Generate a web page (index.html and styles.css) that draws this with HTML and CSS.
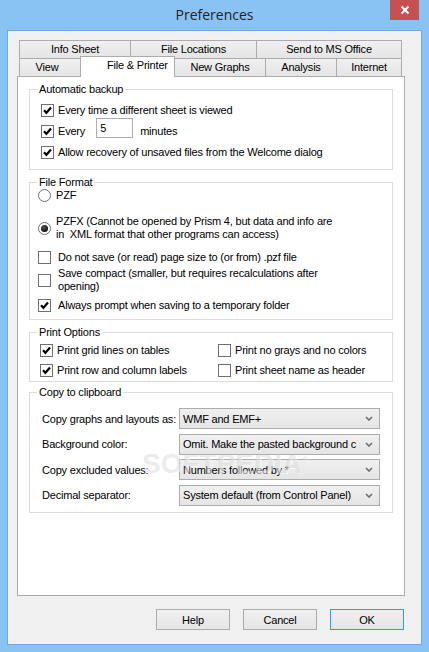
FILE: index.html
```html
<!DOCTYPE html>
<html lang="en">
<head>
    <meta charset="UTF-8">
    <title>Preferences</title>
    <link rel="stylesheet" href="styles.css">
</head>
<body>

<div class="window">
    <div class="titlebar">
        <div class="title">Preferences</div>
        <div class="close">
            <svg width="10" height="10" viewBox="0 0 10 10"><path d="M1.5 1.5L8.5 8.5M8.5 1.5L1.5 8.5" stroke="#fff" stroke-width="2"/></svg>
        </div>
    </div>

    <div class="client">
        <div class="tabs">
            <div class="tab-row back">
                <div class="tab">Info Sheet</div>
                <div class="tab">File Locations</div>
                <div class="tab last">Send to MS Office</div>
            </div>
            <div class="tab-row front">
                <div class="tab tab-view">View</div>
                <div class="tab active">File &amp; Printer</div>
                <div class="tab">New Graphs</div>
                <div class="tab">Analysis</div>
                <div class="tab last">Internet</div>
            </div>
        </div>

        <div class="panel">
            <!-- Automatic backup -->
            <fieldset class="group backup">
                <legend>Automatic backup</legend>
                <div class="group-body">
                    <label class="opt">
                        <span class="cb"><svg width="11" height="11" viewBox="0 0 11 11"><path d="M2 5.2l2.4 2.6 4.6-5.2" fill="none" stroke="#000" stroke-width="2.2"/></svg></span>
                        Every time a different sheet is viewed
                    </label>
                    <label class="opt">
                        <span class="cb"><svg width="11" height="11" viewBox="0 0 11 11"><path d="M2 5.2l2.4 2.6 4.6-5.2" fill="none" stroke="#000" stroke-width="2.2"/></svg></span>
                        Every
                        <input class="num" type="text" value="5">
                        minutes
                    </label>
                    <label class="opt">
                        <span class="cb"><svg width="11" height="11" viewBox="0 0 11 11"><path d="M2 5.2l2.4 2.6 4.6-5.2" fill="none" stroke="#000" stroke-width="2.2"/></svg></span>
                        Allow recovery of unsaved files from the Welcome dialog
                    </label>
                </div>
            </fieldset>

            <!-- File Format -->
            <fieldset class="group format">
                <legend>File Format</legend>
                <div class="group-body">
                    <label class="opt">
                        <span class="rb"></span>
                        PZF
                    </label>
                    <label class="opt pzfx">
                        <span class="rb on"></span>
                        <span>PZFX (Cannot be opened by Prism 4, but data and info are<br>in &nbsp;XML format that other programs can access)</span>
                    </label>
                    <label class="opt nosize">
                        <span class="cb"></span>
                        Do not save (or read) page size to (or from) .pzf file
                    </label>
                    <label class="opt compact">
                        <span class="cb"></span>
                        <span>Save compact (smaller, but requires recalculations after<br>opening)</span>
                    </label>
                    <label class="opt prompt">
                        <span class="cb"><svg width="11" height="11" viewBox="0 0 11 11"><path d="M2 5.2l2.4 2.6 4.6-5.2" fill="none" stroke="#000" stroke-width="2.2"/></svg></span>
                        Always prompt when saving to a temporary folder
                    </label>
                </div>
            </fieldset>

            <!-- Print Options -->
            <fieldset class="group print">
                <legend>Print Options</legend>
                <div class="group-body">
                    <label class="opt">
                        <span class="cb"><svg width="11" height="11" viewBox="0 0 11 11"><path d="M2 5.2l2.4 2.6 4.6-5.2" fill="none" stroke="#000" stroke-width="2.2"/></svg></span>
                        Print grid lines on tables
                    </label>
                    <label class="opt">
                        <span class="cb"></span>
                        Print no grays and no colors
                    </label>
                    <label class="opt">
                        <span class="cb"><svg width="11" height="11" viewBox="0 0 11 11"><path d="M2 5.2l2.4 2.6 4.6-5.2" fill="none" stroke="#000" stroke-width="2.2"/></svg></span>
                        Print row and column labels
                    </label>
                    <label class="opt">
                        <span class="cb"></span>
                        Print sheet name as header
                    </label>
                </div>
            </fieldset>

            <!-- Copy to clipboard -->
            <fieldset class="group clipboard">
                <legend>Copy to clipboard</legend>
                <div class="group-body">
                    <span>Copy graphs and layouts as:</span>
                    <div class="combo"><span>WMF and EMF+</span><svg width="8" height="5" viewBox="0 0 8 5"><path d="M1 1l3 3 3-3" fill="none" stroke="#6d6d6d" stroke-width="1.6"/></svg></div>

                    <span>Background color:</span>
                    <div class="combo"><span>Omit. Make the pasted background c</span><svg width="8" height="5" viewBox="0 0 8 5"><path d="M1 1l3 3 3-3" fill="none" stroke="#6d6d6d" stroke-width="1.6"/></svg></div>

                    <span>Copy excluded values:</span>
                    <div class="combo"><span>Numbers followed by *</span><svg width="8" height="5" viewBox="0 0 8 5"><path d="M1 1l3 3 3-3" fill="none" stroke="#6d6d6d" stroke-width="1.6"/></svg></div>

                    <span>Decimal separator:</span>
                    <div class="combo"><span>System default (from Control Panel)</span><svg width="8" height="5" viewBox="0 0 8 5"><path d="M1 1l3 3 3-3" fill="none" stroke="#6d6d6d" stroke-width="1.6"/></svg></div>
                </div>
            </fieldset>

            <div class="watermark">SOFTPEDIA<sup>®</sup></div>
        </div>

        <div class="buttons">
            <button class="btn">Help</button>
            <button class="btn">Cancel</button>
            <button class="btn default">OK</button>
        </div>
    </div>
</div>

</body>
</html>
```

FILE: styles.css
```css
* {
    box-sizing: border-box;
}

body {
    margin: 0;
    font-family: "Liberation Sans", Arial, sans-serif;
    font-size: 11px;
    letter-spacing: -0.2px;
    color: #000;
}

.window {
    width: 429px;
    height: 652px;
    background: #89c3f4;
    display: flex;
    flex-direction: column;
}

.titlebar {
    flex: none;
    height: 30px;
    display: grid;
    grid-template-columns: 1fr auto 1fr;
}

.title {
    grid-column: 2;
    font-family: "Open Sans", sans-serif;
    font-size: 14px;
    line-height: 30px;
    letter-spacing: 0;
    color: #222;
}

.close {
    grid-column: 3;
    justify-self: end;
    width: 29px;
    height: 20px;
    margin-right: 10px;
    background: #c75050;
    display: flex;
    align-items: center;
    justify-content: center;
}

.client {
    flex: 1;
    margin: 0 7px 7px;
    border: 1px solid #6fa8dc;
    background: #f0f0f0;
    padding: 9px 16px 0 9px;
}

/* tabs */
.tabs {
    margin: 0 3px 0 2px;
}

.tab-row {
    display: grid;
    height: 18px;
}

.back {
    grid-template-columns: 111px 126px 1fr;
}

.front {
    grid-template-columns: 62px 93px 91px 71px 1fr;
}

.tab {
    border: 0 solid #acacac;
    border-width: 1px 0 0 1px;
    background: linear-gradient(#f0f0f0, #e5e5e5);
    text-align: center;
    line-height: 17px;
    white-space: nowrap;
}

.tab.last {
    border-right-width: 1px;
}

.tab-view {
    padding-right: 7px;
}

.tab.active {
    background: #fff;
    margin: -2px -1px -1px -1px;
    border-right-width: 1px;
    z-index: 1;
    text-align: left;
    padding-left: 26px;
}

/* page */
.panel {
    position: relative;
    height: 520px;
    border: 1px solid #acacac;
    background: #fff;
    padding: 0 11px;
}

.group {
    margin: 0;
    padding: 0;
    border: 1px solid #dcdcdc;
    min-width: 0;
}

.group legend {
    margin-left: 7px;
    padding: 0 2px;
    line-height: 13px;
}

.opt {
    display: flex;
    align-items: center;
    white-space: nowrap;
    line-height: 13px;
}

.cb,
.rb {
    flex: none;
    width: 13px;
    height: 13px;
    border: 1px solid #707070;
    background: #fff;
    display: inline-flex;
    align-items: center;
    justify-content: center;
    margin-right: 4px;
}

.rb {
    border-radius: 50%;
    margin-right: 5px;
}

.rb.on::after {
    content: "";
    width: 7px;
    height: 7px;
    border-radius: 50%;
    background: radial-gradient(circle at 40% 35%, #555, #111 70%);
}

/* Automatic backup */
.backup {
    margin-top: 6px;
}

.backup .group-body {
    padding: 4px 0 6px 11px;
}

.backup .opt {
    height: 21px;
}

.num {
    align-self: flex-start;
    width: 37px;
    height: 20px;
    margin: -3px 7px 0 11px;
    padding: 0 3px;
    border: 1px solid #abadb3;
    font: inherit;
    letter-spacing: inherit;
    color: #000;
    outline: none;
}

/* File Format */
.format {
    margin-top: 6px;
}

.format .group-body {
    padding: 0 0 7px 8px;
}

.format .cb {
    margin-right: 7px;
}

.pzfx {
    margin-top: 13px;
}

.nosize {
    margin-top: 10px;
}

.compact {
    margin-top: 3px;
}

.prompt {
    margin-top: 6px;
}

/* Print Options */
.print {
    margin-top: 6px;
}

.print .group-body {
    display: grid;
    grid-template-columns: 178px 1fr;
    row-gap: 7px;
    padding: 5px 0 4px 10px;
}

/* Copy to clipboard */
.clipboard {
    margin-top: 4px;
}

.clipboard .group-body {
    display: grid;
    grid-template-columns: 137px 1fr;
    row-gap: 4.6px;
    align-items: center;
    padding: 9px 12px 6px;
}

.combo {
    height: 21px;
    border: 1px solid #acacac;
    background: linear-gradient(#f0f0f0, #e5e5e5);
    display: flex;
    align-items: center;
    padding-left: 3px;
}

.combo span {
    flex: 1;
    overflow: hidden;
    white-space: nowrap;
}

.combo svg {
    margin: 0 6px 0 4px;
}

.watermark {
    position: absolute;
    left: 124px;
    top: 369px;
    font-size: 28px;
    font-weight: bold;
    line-height: 28px;
    letter-spacing: 0;
    color: rgba(190, 190, 190, 0.3);
    text-shadow: 1px 1px 0 rgba(255, 255, 255, 0.5);
    pointer-events: none;
}

.watermark sup {
    font-size: 9px;
    font-weight: normal;
}

/* buttons */
.buttons {
    display: flex;
    justify-content: flex-end;
    gap: 13px;
    margin: 13px 1px 0 0;
}

.btn {
    width: 74px;
    height: 21px;
    padding: 0;
    border: 1px solid #acacac;
    background: linear-gradient(#f0f0f0, #e5e5e5);
    font: inherit;
    letter-spacing: inherit;
    color: #000;
}

.btn.default {
    border-color: #3399ff;
}
```
